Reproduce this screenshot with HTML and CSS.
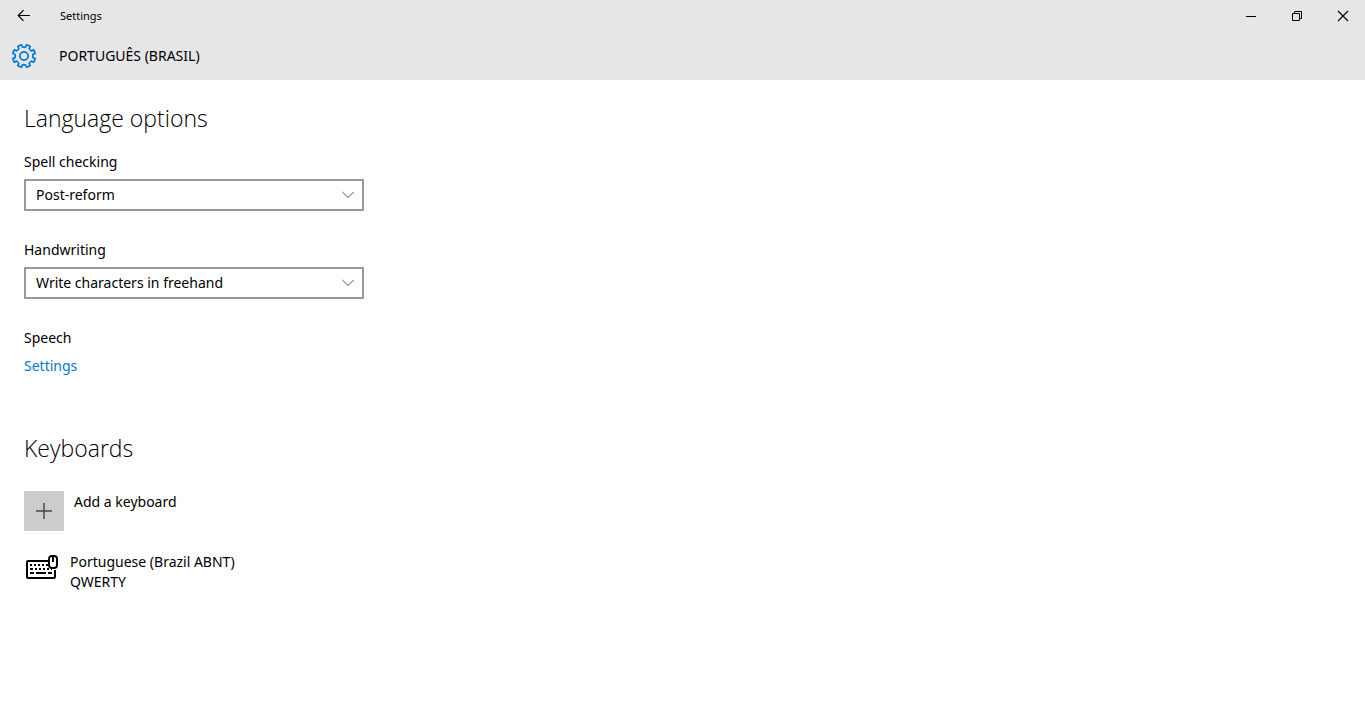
FILE: index.html
```html
<!DOCTYPE html>
<html lang="en">
<head>
<meta charset="utf-8">
<meta name="viewport" content="width=device-width, initial-scale=1">
<title>Settings</title>
<link rel="stylesheet" href="styles.css">
</head>
<body>
<header class="header">
  <div class="titlebar">
    <button class="back" type="button" aria-label="Back">
      <svg width="48" height="32" viewBox="0 0 48 32"><path d="M30 15.5H18.5M23.5 10.2L18.2 15.5L23.5 20.8" fill="none" stroke="#000" stroke-width="1.2"/></svg>
    </button>
    <span class="app-name">Settings</span>
    <div class="window-buttons">
      <button type="button" aria-label="Minimize">
        <svg width="46" height="32" viewBox="0 0 46 32"><path d="M18 16.5H28" stroke="#000"/></svg>
      </button>
      <button type="button" aria-label="Restore">
        <svg width="46" height="32" viewBox="0 0 46 32"><path d="M18.5 13.5H25.5V20.5H18.5ZM20.5 13V11.5H27.5V18.5H26" fill="none" stroke="#000"/></svg>
      </button>
      <button type="button" aria-label="Close">
        <svg width="46" height="32" viewBox="0 0 46 32"><path d="M18 11L28 21M28 11L18 21" stroke="#000" stroke-width="1.1"/></svg>
      </button>
    </div>
  </div>
  <div class="page-title">
    <svg class="gear" width="24" height="24" viewBox="-12 -12 24 24" fill="none" stroke="#0078d7" stroke-width="1.7" stroke-linejoin="round">
      <defs><path id="tooth" d="M0 -8.7L1.5 -8.8L2.6 -11.2L6.1 -9.8L5.2 -7.3L6.2 -6.2"/></defs>
      <use href="#tooth"/>
      <use href="#tooth" transform="rotate(45)"/>
      <use href="#tooth" transform="rotate(90)"/>
      <use href="#tooth" transform="rotate(135)"/>
      <use href="#tooth" transform="rotate(180)"/>
      <use href="#tooth" transform="rotate(225)"/>
      <use href="#tooth" transform="rotate(270)"/>
      <use href="#tooth" transform="rotate(315)"/>
      <circle r="4.1"/>
    </svg>
    <h1>PORTUGUÊS (BRASIL)</h1>
  </div>
</header>
<main class="content">
  <section>
    <h2>Language options</h2>
    <div class="field">
      <label for="spell">Spell checking</label>
      <div class="select">
        <select id="spell"><option>Post-reform</option></select>
        <svg class="chevron" width="12" height="8" viewBox="0 0 12 8"><path d="M0.4 1L6 6.6L11.6 1" fill="none" stroke="#555"/></svg>
      </div>
    </div>
    <div class="field">
      <label for="handwriting">Handwriting</label>
      <div class="select">
        <select id="handwriting"><option>Write characters in freehand</option></select>
        <svg class="chevron" width="12" height="8" viewBox="0 0 12 8"><path d="M0.4 1L6 6.6L11.6 1" fill="none" stroke="#555"/></svg>
      </div>
    </div>
    <div class="speech">
      <h3>Speech</h3>
      <a href="#speech">Settings</a>
    </div>
  </section>
  <section>
    <h2>Keyboards</h2>
    <button class="add" type="button">
      <span class="add-tile"><svg width="40" height="40" viewBox="0 0 40 40"><path d="M12 20H28M20 12V28" stroke="#444" stroke-width="1.4"/></svg></span>
      <span class="add-label">Add a keyboard</span>
    </button>
    <div class="keyboard">
      <svg width="36" height="28" viewBox="0 0 36 28" fill="none" stroke="#000" stroke-width="2">
        <path d="M24 9H4Q3 9 3 10V25Q3 26 4 26H30Q31 26 31 25V18"/>
        <rect x="25" y="4" width="8" height="12" rx="3"/>
        <path d="M29 5V10"/>
        <path d="M6 13H8M10 13H12M14 13H16M18 13H20M22 13H24M6 17H9M11 17H13M15 17H17M19 17H21M23 17H25M27 17H28M6 21H10M12 21H22M24 21H28"/>
      </svg>
      <div>Portuguese (Brazil ABNT)<br>QWERTY</div>
    </div>
  </section>
</main>
</body>
</html>
```
FILE: styles.css
```css
* { box-sizing: border-box; }
body {
  margin: 0;
  background: #fff;
  color: #000;
  font: 14px/20px "Segoe UI", "Noto Sans", "Open Sans", sans-serif;
}
h1, h2, h3 { margin: 0; font-weight: 400; }
button {
  padding: 0;
  border: 0;
  background: none;
  color: inherit;
  font: inherit;
}
svg { display: block; }
.header { background: #e6e6e6; }
.titlebar { display: flex; align-items: center; height: 32px; }
.app-name { padding-left: 12px; font-size: 11px; }
.window-buttons { display: flex; margin-left: auto; margin-right: -1px; }
.page-title { display: flex; align-items: center; height: 48px; padding: 0 12px; }
.page-title h1 { margin-left: 23px; font-size: 14px; }
.content { padding: 22px 24px; }
h2 {
  font: 300 23px/32px "Segoe UI", "Open Sans", "Noto Sans", sans-serif;
}
.field { margin-top: 18px; }
.field + .field { margin-top: 29px; }
.field label { display: block; }
.select {
  position: relative;
  width: 340px;
  max-width: 100%;
  margin-top: 7px;
}
.select select {
  display: block;
  width: 100%;
  height: 32px;
  padding: 0 32px 0 10px;
  border: 2px solid #999;
  border-radius: 0;
  background: #fff;
  color: #000;
  font: inherit;
  appearance: none;
}
.chevron {
  position: absolute;
  top: 12px;
  right: 10px;
  pointer-events: none;
}
.speech { margin: 29px 0 56px; }
.speech h3 { font-size: 14px; }
.speech a {
  display: inline-block;
  margin-top: 8px;
  color: #0078d7;
  text-decoration: none;
}
.add {
  display: flex;
  gap: 10px;
  margin-top: 27px;
}
.add-tile { background: #ccc; }
.add-label { padding-top: 1px; }
.keyboard { display: flex; gap: 10px; margin-top: 21px; }
```
